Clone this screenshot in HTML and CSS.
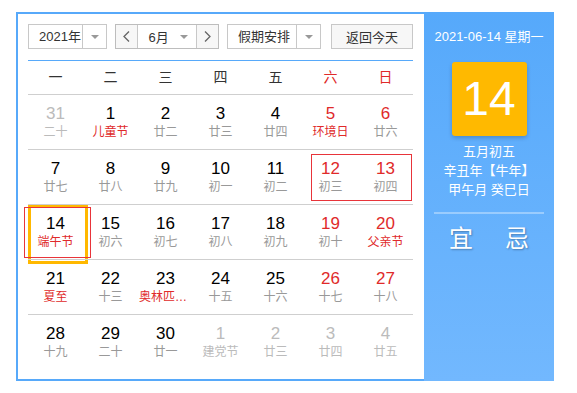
FILE: index.html
```html
<!DOCTYPE html>
<html lang="zh-CN">
<head>
    <meta charset="UTF-8">
    <meta name="viewport" content="width=device-width, initial-scale=1.0">
    <title>万年历</title>
    <link rel="stylesheet" href="styles.css">
</head>
<body>

<div class="calendar">
    <div class="cal-main">
        <!-- 顶部工具条 -->
        <div class="toolbar">
            <div class="select year-select">
                <span class="select-text">2021年</span>
                <span class="select-arrow"><i class="tri"></i></span>
            </div>
            <div class="month-group">
                <span class="nav-btn">
                    <svg width="7" height="11" viewBox="0 0 7 11"><polyline points="6,0.5 1,5.5 6,10.5" fill="none" stroke="#666" stroke-width="1.3"/></svg>
                </span>
                <span class="month-select">
                    <span>6月</span>
                    <i class="tri"></i>
                </span>
                <span class="nav-btn">
                    <svg width="7" height="11" viewBox="0 0 7 11"><polyline points="1,0.5 6,5.5 1,10.5" fill="none" stroke="#666" stroke-width="1.3"/></svg>
                </span>
            </div>
            <div class="select holiday-select">
                <span class="select-text">假期安排</span>
                <span class="select-arrow"><i class="tri"></i></span>
            </div>
            <button class="today-btn">返回今天</button>
        </div>

        <!-- 星期 -->
        <div class="week">
            <span>一</span><span>二</span><span>三</span><span>四</span><span>五</span>
            <span class="weekend">六</span><span class="weekend">日</span>
        </div>

        <!-- 日期 -->
        <div class="days">
            <div class="day other"><b>31</b><em>二十</em></div>
            <div class="day"><b>1</b><em class="fest">儿童节</em></div>
            <div class="day"><b>2</b><em>廿二</em></div>
            <div class="day"><b>3</b><em>廿三</em></div>
            <div class="day"><b>4</b><em>廿四</em></div>
            <div class="day weekend"><b>5</b><em class="fest">环境日</em></div>
            <div class="day weekend"><b>6</b><em>廿六</em></div>

            <div class="day"><b>7</b><em>廿七</em></div>
            <div class="day"><b>8</b><em>廿八</em></div>
            <div class="day"><b>9</b><em>廿九</em></div>
            <div class="day"><b>10</b><em>初一</em></div>
            <div class="day"><b>11</b><em>初二</em></div>
            <div class="day weekend"><b>12</b><em>初三</em><span class="mark mark-pair"></span></div>
            <div class="day weekend"><b>13</b><em>初四</em></div>

            <div class="day today"><b>14</b><em class="fest">端午节</em><span class="mark mark-today"></span></div>
            <div class="day"><b>15</b><em>初六</em></div>
            <div class="day"><b>16</b><em>初七</em></div>
            <div class="day"><b>17</b><em>初八</em></div>
            <div class="day"><b>18</b><em>初九</em></div>
            <div class="day weekend"><b>19</b><em>初十</em></div>
            <div class="day weekend"><b>20</b><em class="fest">父亲节</em></div>

            <div class="day"><b>21</b><em class="fest">夏至</em></div>
            <div class="day"><b>22</b><em>十三</em></div>
            <div class="day"><b>23</b><em class="fest">奥林匹克日</em></div>
            <div class="day"><b>24</b><em>十五</em></div>
            <div class="day"><b>25</b><em>十六</em></div>
            <div class="day weekend"><b>26</b><em>十七</em></div>
            <div class="day weekend"><b>27</b><em>十八</em></div>

            <div class="day"><b>28</b><em>十九</em></div>
            <div class="day"><b>29</b><em>二十</em></div>
            <div class="day"><b>30</b><em>廿一</em></div>
            <div class="day other"><b>1</b><em>建党节</em></div>
            <div class="day other"><b>2</b><em>廿三</em></div>
            <div class="day other"><b>3</b><em>廿四</em></div>
            <div class="day other"><b>4</b><em>廿五</em></div>
        </div>
    </div>

    <!-- 右侧详情 -->
    <div class="cal-side">
        <div class="side-date">2021-06-14 星期一</div>
        <div class="side-day">14</div>
        <div class="side-lunar">
            <p>五月初五</p>
            <p>辛丑年【牛年】</p>
            <p>甲午月 癸巳日</p>
        </div>
        <div class="side-line"></div>
        <div class="side-yiji">
            <span>宜</span>
            <span>忌</span>
        </div>
    </div>
</div>

</body>
</html>
```

FILE: styles.css
```css
* {
    margin: 0;
    padding: 0;
    box-sizing: border-box;
}
body {
    background: #fff;
    padding: 12px 0 0 16px;
    font-family: "Liberation Sans", "Noto Sans CJK SC", sans-serif;
    color: #333;
}
.calendar {
    display: flex;
    width: 538px;
    height: 369px;
}
.cal-main {
    width: 408px;
    border: 2px solid #57a9fa;
    border-right: none;
    padding: 10px 11px 10px 10px;
    background: #fff;
}

/* 工具条 */
.toolbar {
    display: flex;
    height: 25px;
    margin-bottom: 11px;
    font-size: 13px;
}
.select {
    display: flex;
    border: 1px solid #c8c8c8;
    background: #fff;
    height: 25px;
}
.select-text {
    flex: 1;
    padding-left: 10px;
    line-height: 23px;
}
.select-arrow {
    width: 24px;
    border-left: 1px solid #c8c8c8;
    display: flex;
    align-items: center;
    justify-content: center;
}
.tri {
    width: 0;
    height: 0;
    border-left: 4px solid transparent;
    border-right: 4px solid transparent;
    border-top: 4px solid #999;
}
.year-select {
    width: 79px;
}
.month-group {
    display: flex;
    width: 104px;
    margin-left: 8px;
    border: 1px solid #bdbdbd;
    height: 25px;
}
.nav-btn {
    width: 22px;
    background: #f7f7f7;
    display: flex;
    align-items: center;
    justify-content: center;
}
.month-select {
    width: 60px;
    border-left: 1px solid #c8c8c8;
    border-right: 1px solid #c8c8c8;
    display: flex;
    align-items: center;
    justify-content: space-between;
    padding: 0 8px 0 10px;
    background: #fff;
}
.holiday-select {
    width: 94px;
    margin-left: 8px;
}
.today-btn {
    width: 82px;
    height: 25px;
    margin-left: 10px;
    border: 1px solid #c8c8c8;
    background: #f7f7f7;
    color: #333;
    font-family: inherit;
    font-size: 13px;
}

/* 星期 */
.week {
    display: grid;
    grid-template-columns: repeat(7, 55px);
    border-top: 1px solid #57a9fa;
    height: 34px;
    line-height: 33px;
    text-align: center;
    font-size: 14px;
    color: #333;
}
.week .weekend {
    color: #e02a2a;
}

/* 日期格子 */
.days {
    display: grid;
    grid-template-columns: repeat(7, 55px);
    grid-auto-rows: 55px;
}
.day {
    position: relative;
    border-top: 1px solid #cfcfcf;
    padding: 9px 1px 0;
    text-align: center;
}
.day b {
    display: block;
    font-weight: normal;
    font-size: 17px;
    line-height: 20px;
    color: #000;
}
.day em {
    display: block;
    font-style: normal;
    font-size: 12px;
    line-height: 17px;
    color: #999;
    white-space: nowrap;
    overflow: hidden;
    text-overflow: ellipsis;
}
.day.weekend b {
    color: #e02a2a;
}
.day em.fest {
    color: #e02a2a;
}
.day.other b,
.day.other em {
    color: #bbb;
}
.day.today::before {
    content: "";
    position: absolute;
    left: 0;
    top: 0;
    width: 54px;
    height: 53px;
    border: 3px solid #ffb800;
}

/* 红色标注框 */
.mark {
    position: absolute;
    border: 1px solid #e8343a;
    pointer-events: none;
}
.mark-today {
    left: -4px;
    top: 2px;
    width: 67px;
    height: 51px;
}
.mark-pair {
    left: 8px;
    top: 4px;
    width: 101px;
    height: 47px;
}

/* 右侧 */
.cal-side {
    width: 130px;
    background: linear-gradient(#56a9fb, #72b8fe);
    color: #fff;
    text-align: center;
    padding-top: 16px;
}
.side-date {
    font-size: 13px;
    line-height: 18px;
}
.side-day {
    width: 75px;
    height: 74px;
    margin: 16px auto 0;
    background: #ffb900;
    border-radius: 3px;
    box-shadow: 0 2px 4px rgba(0, 0, 0, 0.2);
    font-size: 48px;
    line-height: 74px;
}
.side-lunar {
    margin-top: 6px;
    font-size: 13px;
    line-height: 19px;
}
.side-line {
    height: 2px;
    margin: 13px 10px 0;
    background: rgba(255, 255, 255, 0.35);
}
.side-yiji {
    display: flex;
    justify-content: center;
    gap: 32px;
    margin-top: 10px;
    font-size: 24px;
    line-height: 30px;
    text-shadow: 1px 1px 2px rgba(0, 0, 0, 0.3);
}
```
